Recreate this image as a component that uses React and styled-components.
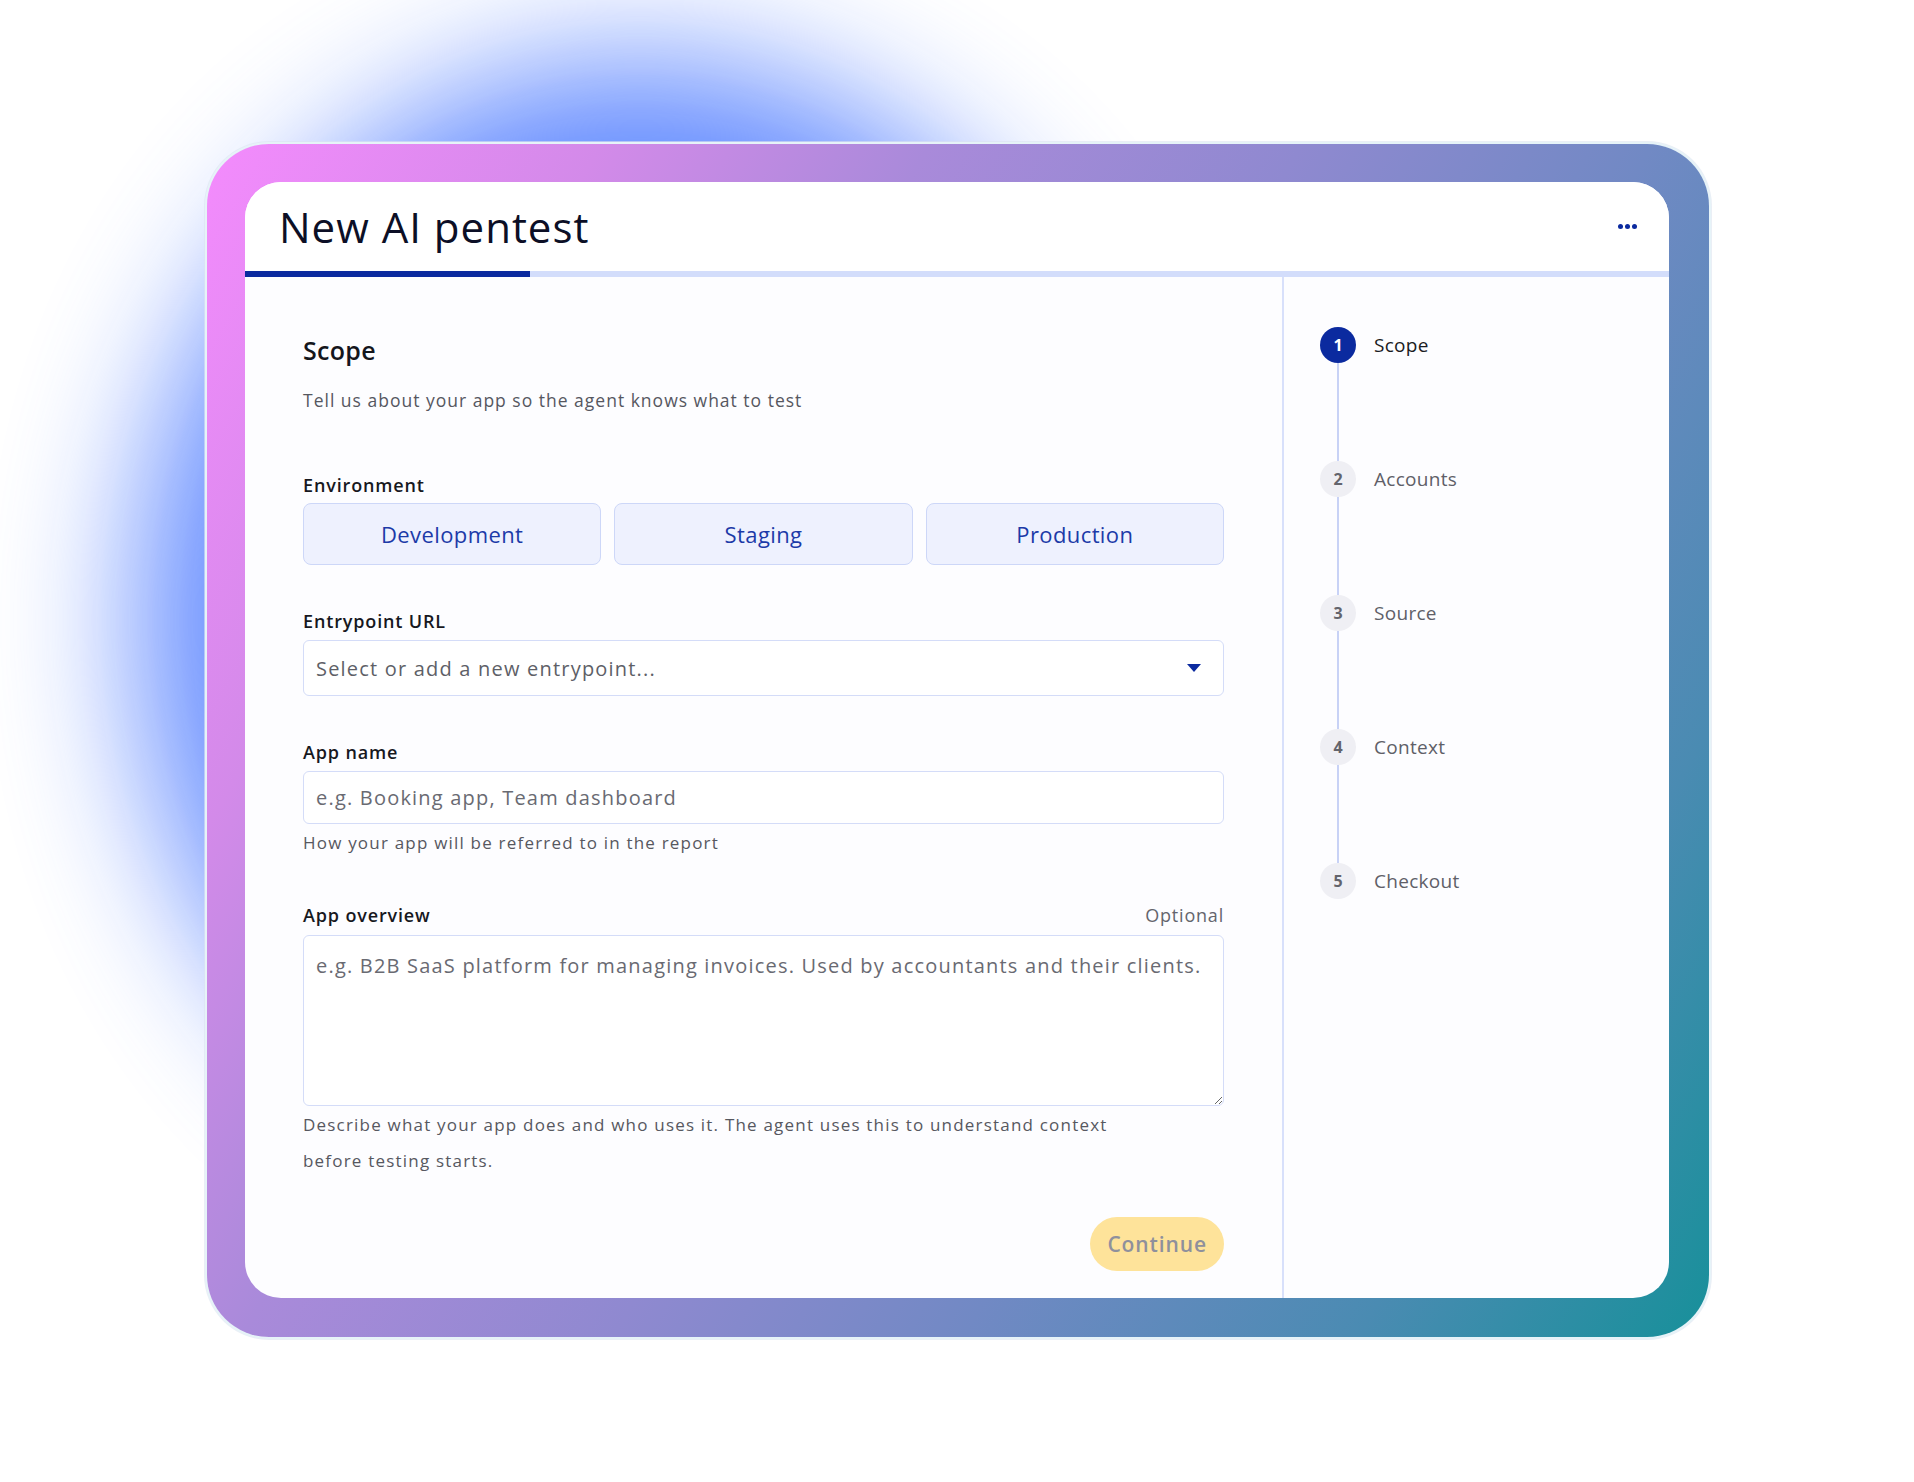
import styled, { createGlobalStyle } from 'styled-components';

const GlobalStyle = createGlobalStyle`
  html, body {
    margin: 0;
    padding: 0;
    background: #ffffff;
  }
  body {
    font-family: 'Open Sans', 'Noto Sans', sans-serif;
    color: #1b1b22;
  }
  * {
    box-sizing: border-box;
  }
`;

const steps = ['Scope', 'Accounts', 'Source', 'Context', 'Checkout'];
const environments = ['Development', 'Staging', 'Production'];

const Page = styled.div`
  position: relative;
  width: 1914px;
  height: 1482px;
  overflow: hidden;
  padding: 144px 0 0 207px;
  background: #ffffff;
`;

const Glow = styled.div`
  position: absolute;
  left: 140px;
  top: 60px;
  width: 1000px;
  height: 1120px;
  border-radius: 50%;
  background: #5a84ff;
  filter: blur(72px);
  opacity: 0.95;
`;

const Frame = styled.div`
  position: relative;
  width: 1502px;
  height: 1193px;
  padding: 38px 39px 39px 38px;
  border-radius: 62px;
  background: linear-gradient(120deg, #f48bfd 0%, #d38ae9 18%, #a98ada 33%, #8f89d0 50%, #7189c4 66%, #4a8bb2 84%, #17909a 100%);
  box-shadow: 0 0 0 2px #e6f3f8, 0 0 0 3px rgba(220, 228, 240, 0.6);
`;

const Card = styled.div`
  width: 1424px;
  height: 1116px;
  border-radius: 36px;
  background: #fdfdff;
  overflow: hidden;
  display: flex;
  flex-direction: column;
`;

const Header = styled.header`
  height: 89px;
  display: flex;
  align-items: center;
  justify-content: space-between;
  padding: 0 28px 0 34px;
  background: #ffffff;
`;

const Title = styled.h1`
  margin: 0;
  font-size: 42px;
  font-weight: 500;
  color: #0c0f26;
  letter-spacing: 1px;
`;

const Dots = styled.div`
  display: flex;
  gap: 2px;
  padding: 4px;

  span {
    width: 5px;
    height: 5px;
    border-radius: 50%;
    background: #0b2a9f;
  }
`;

const Progress = styled.div`
  height: 6px;
  background: #d3ddfb;
`;

const ProgressFill = styled.div`
  height: 100%;
  background: #0b2a9f;
`;

const Body = styled.div`
  flex: 1;
  display: grid;
  grid-template-columns: 1037px 1fr;
`;

const Form = styled.section`
  padding: 56px 58px 0 58px;
  display: flex;
  flex-direction: column;
`;

const SectionTitle = styled.h2`
  margin: 0;
  font-size: 25px;
  line-height: 34px;
  font-weight: 600;
  color: #15161c;
  letter-spacing: 0.3px;
`;

const Subtitle = styled.p`
  margin: 20px 0 0;
  font-size: 17.5px;
  line-height: 26px;
  color: #56575f;
  letter-spacing: 1px;
`;

const Field = styled.div`
  margin-top: ${(p) => p.$gap}px;
  display: flex;
  flex-direction: column;
`;

const LabelRow = styled.div`
  display: flex;
  justify-content: space-between;
  align-items: center;
  height: 24px;
  margin-bottom: ${(p) => p.$space || 7}px;
`;

const Label = styled.label`
  font-size: 18px;
  font-weight: 600;
  color: #17181e;
  letter-spacing: 0.85px;
`;

const Optional = styled.span`
  font-size: 18px;
  color: #64656d;
  letter-spacing: 0.8px;
`;

const EnvGrid = styled.div`
  display: grid;
  grid-template-columns: repeat(3, 1fr);
  gap: 13px;
`;

const EnvButton = styled.button`
  height: 62px;
  border: 1.5px solid #cdd7f8;
  border-radius: 8px;
  background: #eef1fe;
  color: #1c3aa8;
  font-family: inherit;
  font-size: 22px;
  font-weight: 500;
  letter-spacing: 0.4px;
  cursor: pointer;
`;

const SelectBox = styled.div`
  height: 56px;
  border: 1.5px solid #d4dcf8;
  border-radius: 6px;
  background: #ffffff;
  display: flex;
  align-items: center;
  justify-content: space-between;
  padding: 0 22px 0 12px;
  font-size: 20px;
  letter-spacing: 1.2px;
  color: #5e5f67;
`;

const Caret = styled.span`
  width: 0;
  height: 0;
  border-left: 7px solid transparent;
  border-right: 7px solid transparent;
  border-top: 8px solid #0b2a9f;
`;

const TextInput = styled.input`
  height: 53px;
  border: 1.5px solid #d4dcf8;
  border-radius: 6px;
  background: #ffffff;
  padding: 0 12px;
  font-family: inherit;
  font-size: 20px;
  letter-spacing: 1.2px;
  color: #1b1b22;
  outline: none;

  &::placeholder {
    color: #696a72;
  }
`;

const TextArea = styled.textarea`
  height: 171px;
  border: 1.5px solid #d4dcf8;
  border-radius: 6px;
  background: #ffffff;
  padding: 16px 4px 16px 12px;
  font-family: inherit;
  font-size: 20px;
  line-height: 28px;
  letter-spacing: 1.2px;
  color: #1b1b22;
  outline: none;
  resize: vertical;

  &::placeholder {
    color: #696a72;
  }
`;

const Help = styled.p`
  margin: ${(p) => p.$top || 7}px 0 0;
  max-width: 840px;
  font-size: 17px;
  line-height: ${(p) => p.$lh || 24}px;
  letter-spacing: 1.2px;
  color: #57585f;
`;

const Actions = styled.div`
  margin-top: 38px;
  display: flex;
  justify-content: flex-end;
`;

const ContinueButton = styled.button`
  height: 54px;
  padding: 0 17px;
  border: none;
  border-radius: 27px;
  background: #fee39a;
  color: #8f909c;
  font-family: inherit;
  font-size: 21px;
  font-weight: 600;
  letter-spacing: 0.9px;
`;

const Stepper = styled.aside`
  border-left: 2px solid #d8e0fb;
  padding: 50px 0 0 36px;
  display: flex;
  flex-direction: column;
`;

const Step = styled.div`
  display: flex;
  align-items: center;
  gap: 18px;
`;

const StepDot = styled.span`
  width: 36px;
  height: 36px;
  border-radius: 50%;
  display: flex;
  align-items: center;
  justify-content: center;
  font-size: 16px;
  font-weight: 700;
  background: ${(p) => (p.$active ? '#0b2a9f' : '#efeff4')};
  color: ${(p) => (p.$active ? '#ffffff' : '#63646c')};
`;

const StepLabel = styled.span`
  font-size: 19px;
  letter-spacing: 0.3px;
  color: ${(p) => (p.$active ? '#1a1b22' : '#5f6068')};
`;

const Connector = styled.div`
  width: 1.5px;
  height: 98px;
  margin-left: 17px;
  background: #c8d2f6;
`;

export default function App() {
  return (
    <>
      <GlobalStyle />
      <Page>
        <Glow />
        <Frame>
          <Card>
            <Header>
              <Title>New AI pentest</Title>
              <Dots>
                <span />
                <span />
                <span />
              </Dots>
            </Header>
            <Progress>
              <ProgressFill style={{ width: `${(1 / steps.length) * 100}%` }} />
            </Progress>
            <Body>
              <Form>
                <SectionTitle>Scope</SectionTitle>
                <Subtitle>Tell us about your app so the agent knows what to test</Subtitle>

                <Field $gap={60}>
                  <LabelRow $space={6}>
                    <Label>Environment</Label>
                  </LabelRow>
                  <EnvGrid>
                    {environments.map((env) => (
                      <EnvButton key={env}>{env}</EnvButton>
                    ))}
                  </EnvGrid>
                </Field>

                <Field $gap={44}>
                  <LabelRow>
                    <Label>Entrypoint URL</Label>
                  </LabelRow>
                  <SelectBox>
                    <span>Select or add a new entrypoint...</span>
                    <Caret />
                  </SelectBox>
                </Field>

                <Field $gap={44}>
                  <LabelRow>
                    <Label>App name</Label>
                  </LabelRow>
                  <TextInput placeholder="e.g. Booking app, Team dashboard" />
                  <Help>How your app will be referred to in the report</Help>
                </Field>

                <Field $gap={48}>
                  <LabelRow $space={8}>
                    <Label>App overview</Label>
                    <Optional>Optional</Optional>
                  </LabelRow>
                  <TextArea placeholder="e.g. B2B SaaS platform for managing invoices. Used by accountants and their clients." />
                  <Help $top={1} $lh={36}>
                    Describe what your app does and who uses it. The agent uses this to understand context before
                    testing starts.
                  </Help>
                </Field>

                <Actions>
                  <ContinueButton>Continue</ContinueButton>
                </Actions>
              </Form>

              <Stepper>
                {steps.map((step, i) => (
                  <div key={step}>
                    <Step>
                      <StepDot $active={i === 0}>{i + 1}</StepDot>
                      <StepLabel $active={i === 0}>{step}</StepLabel>
                    </Step>
                    {i < steps.length - 1 && <Connector />}
                  </div>
                ))}
              </Stepper>
            </Body>
          </Card>
        </Frame>
      </Page>
    </>
  );
}
